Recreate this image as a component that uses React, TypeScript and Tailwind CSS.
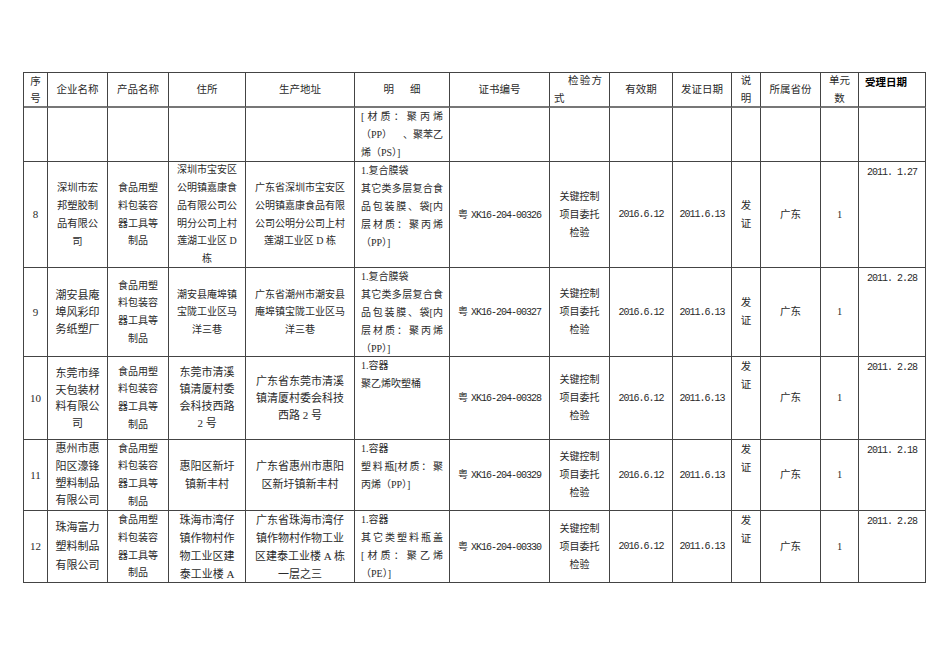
import React from "react";

type V = "center" | "top";

const SERIF = "font-['Liberation_Serif','Noto_Sans_CJK_SC',serif]";
const MONO = "font-['Liberation_Mono','Noto_Sans_CJK_SC',monospace]";
const NUM = "text-[10px] tracking-[-1px] " + MONO;

function Cell({
  children,
  v = "center",
  className = "",
}: {
  children?: React.ReactNode;
  v?: V;
  className?: string;
}) {
  return (
    <div
      className={
        "border-r border-b border-[#444] flex flex-col overflow-hidden " +
        (v === "center" ? "justify-center " : "justify-start ") +
        className
      }
    >
      {children}
    </div>
  );
}

function Lines({ lines, className = "" }: { lines: string[]; className?: string }) {
  return (
    <div className={"flex flex-col items-center " + className}>
      {lines.map((l, i) => (
        <div key={i} className="whitespace-nowrap">
          {l}
        </div>
      ))}
    </div>
  );
}

function J({ parts }: { parts: string[] }) {
  return (
    <div className="flex justify-between whitespace-nowrap">
      {parts.map((p, i) => (
        <span key={i}>{p}</span>
      ))}
    </div>
  );
}

function L({ children }: { children: React.ReactNode }) {
  return <div className="whitespace-nowrap">{children}</div>;
}

function Detail({ children }: { children: React.ReactNode }) {
  return (
    <Cell v="top" className="px-[6px] text-[10px] leading-[18px]">
      {children}
    </Cell>
  );
}

const product = ["食品用塑", "料包装容", "器工具等", "制品"];
const method = ["关键控制", "项目委托", "检验"];

type Row = {
  no: string;
  company: string[];
  companySize: string;
  addr: string[];
  addrSize: string;
  prod: string[];
  detail: React.ReactNode;
  cert: string;
  noteTop: boolean;
  date: string;
};

const rows: Row[] = [
  {
    no: "8",
    company: ["深圳市宏", "邦塑胶制", "品有限公", "司"],
    companySize: "text-[10.3px] leading-[18px]",
    addr: ["深圳市宝安区", "公明镇嘉康食", "品有限公司公", "明分公司上村", "莲湖工业区 D", "栋"],
    prod: ["广东省深圳市宝安区", "公明镇嘉康食品有限", "公司公明分公司上村", "莲湖工业区 D 栋"],
    addrSize: "text-[10px] leading-[17.7px]",
    detail: (
      <>
        <L>1.复合膜袋</L>
        <J parts={["其", "它", "类", "多", "层", "复", "合", "食"]} />
        <J parts={["品", "包", "装", "膜", "、", "袋[内"]} />
        <J parts={["层", "材", "质", "：", "聚", "丙", "烯"]} />
        <L>（PP）]</L>
      </>
    ),
    cert: "XK16-204-00326",
    noteTop: false,
    date: "2011. 1.27",
  },
  {
    no: "9",
    company: ["潮安县庵", "埠风彩印", "务纸塑厂"],
    companySize: "text-[11px] leading-[17px]",
    addr: ["潮安县庵埠镇", "宝陇工业区马", "洋三巷"],
    prod: ["广东省潮州市潮安县", "庵埠镇宝陇工业区马", "洋三巷"],
    addrSize: "text-[10px] leading-[17.5px]",
    detail: (
      <>
        <L>1.复合膜袋</L>
        <J parts={["其", "它", "类", "多", "层", "复", "合", "食"]} />
        <J parts={["品", "包", "装", "膜", "、", "袋[内"]} />
        <J parts={["层", "材", "质", "：", "聚", "丙", "烯"]} />
        <L>（PP）]</L>
      </>
    ),
    cert: "XK16-204-00327",
    noteTop: false,
    date: "2011. 2.28",
  },
  {
    no: "10",
    company: ["东莞市绎", "天包装材", "料有限公", "司"],
    companySize: "text-[11px] leading-[16.5px]",
    addr: ["东莞市清溪", "镇清厦村委", "会科技西路", "2 号"],
    prod: ["广东省东莞市清溪", "镇清厦村委会科技", "西路 2 号"],
    addrSize: "text-[11px] leading-[17px]",
    detail: (
      <>
        <L>1.容器</L>
        <L>聚乙烯吹塑桶</L>
      </>
    ),
    cert: "XK16-204-00328",
    noteTop: true,
    date: "2011. 2.28",
  },
  {
    no: "11",
    company: ["惠州市惠", "阳区濠锋", "塑料制品", "有限公司"],
    companySize: "text-[11px] leading-[17.3px]",
    addr: ["惠阳区新圩", "镇新丰村"],
    prod: ["广东省惠州市惠阳", "区新圩镇新丰村"],
    addrSize: "text-[11px] leading-[18px]",
    detail: (
      <>
        <L>1.容器</L>
        <J parts={["塑", "料", "瓶[材", "质", "：", "聚"]} />
        <L>丙烯（PP）]</L>
      </>
    ),
    cert: "XK16-204-00329",
    noteTop: true,
    date: "2011. 2.18",
  },
  {
    no: "12",
    company: ["珠海富力", "塑料制品", "有限公司"],
    companySize: "text-[11px] leading-[19px]",
    addr: ["珠海市湾仔", "镇作物村作", "物工业区建", "泰工业楼 A"],
    prod: ["广东省珠海市湾仔", "镇作物村作物工业", "区建泰工业楼 A 栋", "一层之三"],
    addrSize: "text-[11px] leading-[18px]",
    detail: (
      <>
        <L>1.容器</L>
        <J parts={["其", "它", "类", "塑", "料", "瓶", "盖"]} />
        <J parts={["[", "材", "质", "：", "聚", "乙", "烯"]} />
        <L>（PE）]</L>
      </>
    ),
    cert: "XK16-204-00330",
    noteTop: true,
    date: "2011. 2.28",
  },
];

const H = "text-[10.5px] border-b-2 border-b-[#777] ";

export default function App() {
  return (
    <div className={"min-h-[672px] w-[950px] bg-white text-[#2a2a2a] pt-[72px] pl-[23px] " + SERIF}>
      <div className="grid w-[903px] grid-cols-[24px_60px_61px_77px_109px_95px_100px_60px_63px_59px_29px_60px_38px_67px] grid-rows-[35px_54px_106px_89px_83px_71px_72px] border-l border-t border-[#444]">
        {/* Header */}
        <Cell className={H + "leading-[17px]"}>
          <Lines lines={["序", "号"]} />
        </Cell>
        <Cell className={H + "leading-[17px]"}>
          <Lines lines={["企业名称"]} />
        </Cell>
        <Cell className={H + "leading-[17px]"}>
          <Lines lines={["产品名称"]} />
        </Cell>
        <Cell className={H + "leading-[17px]"}>
          <Lines lines={["住所"]} />
        </Cell>
        <Cell className={H + "leading-[17px]"}>
          <Lines lines={["生产地址"]} />
        </Cell>
        <Cell className={H + "leading-[17px]"}>
          <div className="flex justify-center">
            <span>明</span>
            <span className="ml-[16px]">细</span>
          </div>
        </Cell>
        <Cell className={H + "leading-[17px]"}>
          <Lines lines={["证书编号"]} />
        </Cell>
        <Cell className={H + "leading-[18px] px-[4px]"}>
          <div className="flex justify-between pl-[14px] pr-[3px]">
            <span>检</span>
            <span>验</span>
            <span>方</span>
          </div>
          <div>式</div>
        </Cell>
        <Cell className={H + "leading-[17px]"}>
          <Lines lines={["有效期"]} />
        </Cell>
        <Cell className={H + "leading-[17px]"}>
          <Lines lines={["发证日期"]} />
        </Cell>
        <Cell className={H + "leading-[18px]"}>
          <Lines lines={["说", "明"]} />
        </Cell>
        <Cell className={H + "leading-[17px]"}>
          <Lines lines={["所属省份"]} />
        </Cell>
        <Cell className={H + "leading-[18px]"}>
          <Lines lines={["单元", "数"]} />
        </Cell>
        <Cell
          v="top"
          className={H + "leading-[18px] pl-[6px] font-bold text-black font-['Noto_Sans_CJK_SC',sans-serif]"}
        >
          <div>受理日期</div>
        </Cell>

        {/* Continuation row */}
        <Cell />
        <Cell />
        <Cell />
        <Cell />
        <Cell />
        <Detail>
          <J parts={["[", "材", "质", "：", "聚", "丙", "烯"]} />
          <J parts={["（PP）", "、聚苯乙"]} />
          <L>烯（PS）]</L>
        </Detail>
        <Cell />
        <Cell />
        <Cell />
        <Cell />
        <Cell />
        <Cell />
        <Cell />
        <Cell />

        {rows.map((r) => (
          <React.Fragment key={r.no}>
            <Cell className="text-[11px]">
              <Lines lines={[r.no]} />
            </Cell>
            <Cell className={r.companySize}>
              <Lines lines={r.company} />
            </Cell>
            <Cell className="text-[10px] leading-[17.7px]">
              <Lines lines={product} />
            </Cell>
            <Cell className={r.addrSize}>
              <Lines lines={r.addr} />
            </Cell>
            <Cell className={r.addrSize}>
              <Lines lines={r.prod} />
            </Cell>
            <Detail>{r.detail}</Detail>
            <Cell className="text-[10px]">
              <div className="flex justify-center items-baseline whitespace-nowrap">
                <span>粤</span>
                <span className={"ml-[3px] " + NUM}>{r.cert}</span>
              </div>
            </Cell>
            <Cell className="text-[10px] leading-[18px]">
              <Lines lines={method} />
            </Cell>
            <Cell>
              <div className={"text-center whitespace-nowrap " + NUM}>2016.6.12</div>
            </Cell>
            <Cell>
              <div className={"text-center whitespace-nowrap " + NUM}>2011.6.13</div>
            </Cell>
            <Cell
              v={r.noteTop ? "top" : "center"}
              className={"text-[10.5px] leading-[18px] " + (r.noteTop ? "pt-[1px]" : "")}
            >
              <Lines lines={["发", "证"]} />
            </Cell>
            <Cell className="text-[10.5px]">
              <Lines lines={["广东"]} />
            </Cell>
            <Cell className="text-[10.5px]">
              <Lines lines={["1"]} />
            </Cell>
            <Cell v="top" className="pt-[2px] leading-[18px]">
              <div className={"text-center whitespace-pre " + NUM}>{r.date}</div>
            </Cell>
          </React.Fragment>
        ))}
      </div>
    </div>
  );
}
